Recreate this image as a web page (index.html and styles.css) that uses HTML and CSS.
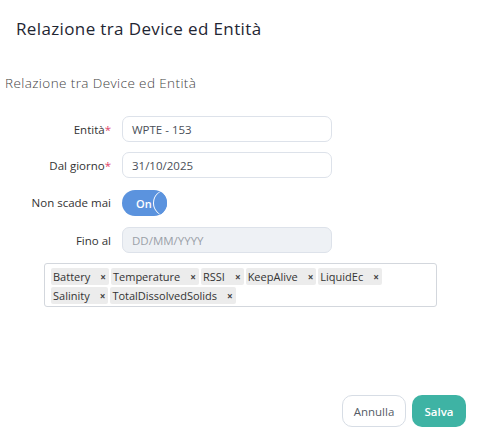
FILE: index.html
```html
<!DOCTYPE html>
<html lang="it">
<head>
<meta charset="utf-8">
<link rel="stylesheet" href="styles.css">
</head>
<body>
<div class="modal">
  <div class="modal-header">
    <h1 class="title">Relazione tra Device ed Entità</h1>
  </div>
  <div class="modal-body">
    <h2 class="subtitle">Relazione tra Device ed Entità</h2>
    <div class="form">
      <div class="row">
        <label class="label">Entità<span class="req">*</span></label>
        <div class="input">WPTE - 153</div>
      </div>
      <div class="row">
        <label class="label">Dal giorno<span class="req">*</span></label>
        <div class="input">31/10/2025</div>
      </div>
      <div class="row row-toggle">
        <label class="label">Non scade mai</label>
        <div class="toggle"><span class="toggle-text">On</span><span class="knob"></span></div>
      </div>
      <div class="row">
        <label class="label">Fino al</label>
        <div class="input disabled">DD/MM/YYYY</div>
      </div>
    </div>
    <div class="tags">
      <span class="tag">Battery<span class="x">×</span></span>
      <span class="tag">Temperature<span class="x">×</span></span>
      <span class="tag">RSSI<span class="x">×</span></span>
      <span class="tag">KeepAlive<span class="x">×</span></span>
      <span class="tag">LiquidEc<span class="x">×</span></span>
      <span class="tag">Salinity<span class="x">×</span></span>
      <span class="tag">TotalDissolvedSolids<span class="x">×</span></span>
    </div>
  </div>
  <div class="modal-footer">
    <button class="btn btn-cancel">Annulla</button>
    <button class="btn btn-save">Salva</button>
  </div>
</div>
</body>
</html>
```
FILE: styles.css
```css
html, body {
  margin: 0;
  padding: 0;
  background: #fff;
}
body {
  font-family: "Open Sans", "DejaVu Sans", sans-serif;
  color: #333;
  width: 481px;
  height: 442px;
  overflow: hidden;
}
.modal {
  display: flex;
  flex-direction: column;
  height: 442px;
}
.modal-header {
  padding: 17px 16px 0 16px;
  height: 44px;
  box-sizing: border-box;
}
.title {
  margin: 0;
  font-size: 17px;
  font-weight: 500;
  color: #1f2633;
  line-height: 24px;
  letter-spacing: 0.37px;
}
.modal-body {
  flex: 1;
  padding: 0 0 0 5px;
}
.subtitle {
  margin: 30px 0 0 0;
  font-size: 13.5px;
  font-weight: 300;
  color: #444;
  line-height: 18px;
  letter-spacing: 0.4px;
}
.form {
  margin-top: 24px;
  display: flex;
  flex-direction: column;
  gap: 10px;
}
.row {
  display: flex;
  align-items: center;
  gap: 11px;
  height: 26px;
}
.row-toggle {
  height: 27px;
  margin-top: 1px;
  margin-bottom: 1px;
}
.label {
  width: 106px;
  text-align: right;
  font-size: 11.5px;
  color: #333;
}
.req {
  color: #e0456b;
}
.input {
  width: 210px;
  height: 26px;
  box-sizing: border-box;
  border: 1px solid #dde2ea;
  border-radius: 7px;
  padding: 0 9px;
  font-size: 11.5px;
  color: #4a4f58;
  display: flex;
  align-items: center;
}
.input.disabled {
  background: #eef1f5;
  color: #9aa0a8;
}
.toggle {
  position: relative;
  width: 45px;
  height: 26px;
  border-radius: 13px;
  background: #5b93de;
  box-sizing: border-box;
  overflow: hidden;
}
.toggle-text {
  position: absolute;
  left: 14px;
  top: 6px;
  color: #fff;
  font-size: 11px;
  font-weight: 600;
  line-height: 16px;
}
.knob {
  position: absolute;
  left: 31px;
  top: 0;
  width: 26px;
  height: 26px;
  border-radius: 50%;
  background: #5b93de;
  box-shadow: inset 1px 0 0 #fff;
  box-sizing: border-box;
}
.tags {
  margin: 10px 0 0 39px;
  width: 393px;
  height: 44px;
  box-sizing: border-box;
  border: 1px solid #d3d7dd;
  border-radius: 3px;
  padding: 4px 6px 3px 6px;
  display: flex;
  flex-wrap: wrap;
  gap: 2px 2px;
  align-content: flex-start;
}
.tag {
  display: inline-flex;
  align-items: center;
  height: 17px;
  background: #ececec;
  border-radius: 2px;
  padding: 0 3px 0 2px;
  font-size: 11px;
  color: #333;
}
.tag .x {
  margin-left: 10px;
  font-size: 10px;
  font-weight: 700;
  color: #444;
}
.modal-footer {
  display: flex;
  justify-content: flex-end;
  gap: 6px;
  padding: 0 15px 15px 0;
}
.btn {
  height: 32px;
  border-radius: 10px;
  font-family: "Open Sans", "DejaVu Sans", sans-serif;
  font-size: 11.5px;
  cursor: pointer;
}
.btn-cancel {
  width: 64px;
  background: #fff;
  border: 1px solid #d7dde5;
  color: #555b66;
}
.btn-save {
  width: 54px;
  background: #3eb3a4;
  border: none;
  color: #fff;
  font-weight: 600;
}
```
